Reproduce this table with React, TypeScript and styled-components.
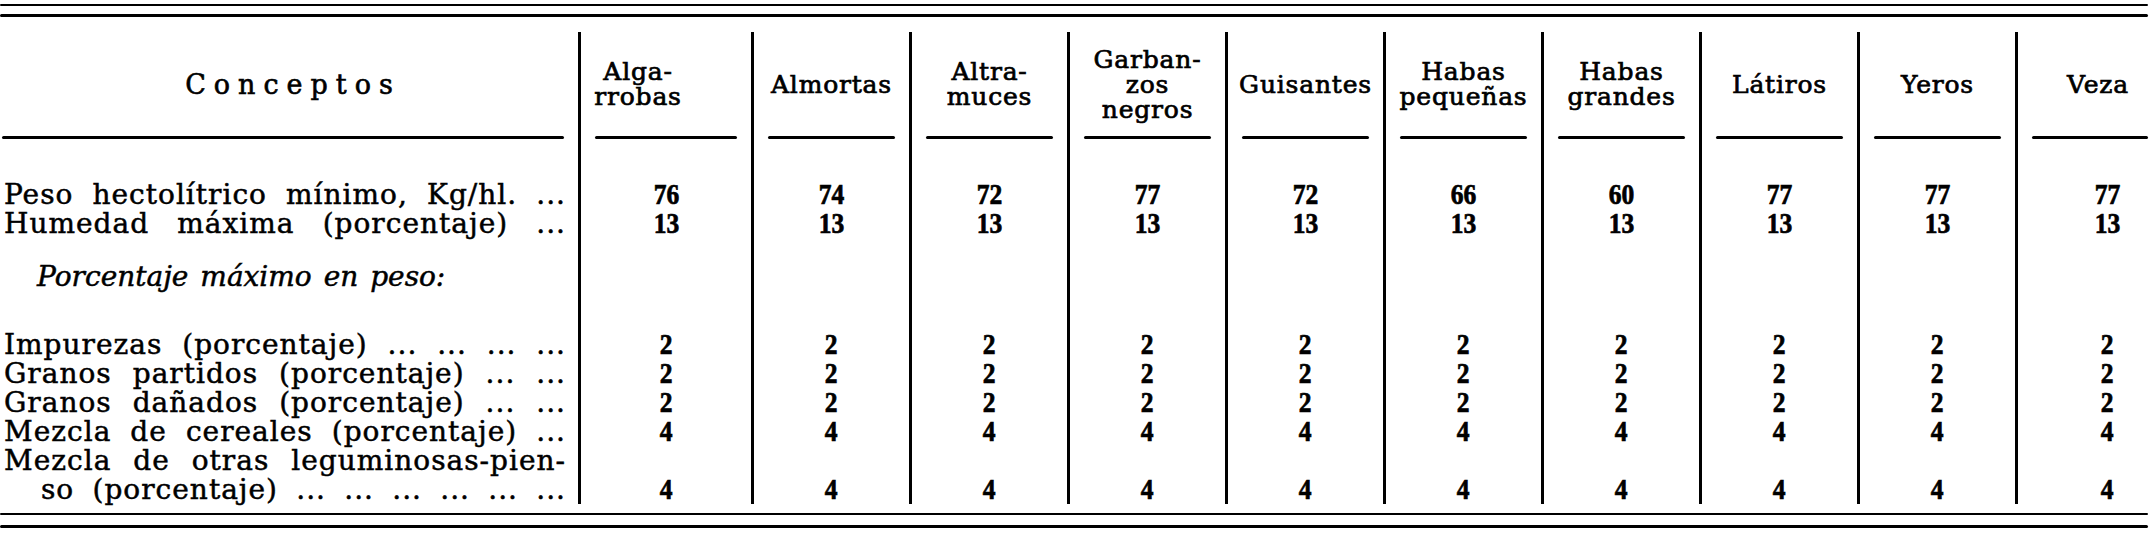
import React from 'react'
import styled, { createGlobalStyle, css } from 'styled-components'

const GlobalStyle = createGlobalStyle`
  html, body {
    margin: 0;
    padding: 0;
    background: #fff;
  }
  body {
    width: 2150px;
    height: 533px;
    overflow: hidden;
    color: #000;
    font-family: "DejaVu Serif", serif;
  }
`

const COLUMNS = '578px 173px repeat(8, 158px) 133px'

const Sheet = styled.div`
  width: 2148px;
  padding-top: 4px;
`

const DoubleRule = styled.div<{ $top: number; $gap: number }>`
  margin-top: ${p => p.$top}px;
  display: flex;
  flex-direction: column;
  gap: ${p => p.$gap}px;
`

const RuleLine = styled.div<{ $h: number }>`
  height: ${p => p.$h}px;
  background: #000;
  border-radius: 2px;
`

const Row = styled.div<{ $space?: number }>`
  display: grid;
  grid-template-columns: ${COLUMNS};
  > * {
    padding-top: ${p => p.$space ?? 0}px;
  }
`

const HeaderRow = styled(Row)`
  margin-top: 15px;
  height: 104px;
`

const ConceptHead = styled.div`
  display: flex;
  align-items: center;
  justify-content: center;
  padding-left: 8px;
  font-size: 27px;
  letter-spacing: 8px;
  -webkit-text-stroke: 0.6px #000;
`

const HeadCell = styled.div<{ $shift?: number }>`
  border-left: 3px solid #000;
  display: flex;
  flex-direction: column;
  align-items: center;
  justify-content: center;
  font-size: 25px;
  line-height: 25px;
  letter-spacing: 0.8px;
  text-align: center;
  -webkit-text-stroke: 0.7px #000;
  ${p => p.$shift && p.$shift > 0 && css`padding-left: ${p.$shift}px;`}
  ${p => p.$shift && p.$shift < 0 && css`padding-right: ${-p.$shift}px;`}
`

const UnderCell = styled.div<{ $first?: boolean; $last?: boolean }>`
  border-left: ${p => (p.$first ? 'none' : '3px solid #000')};
  padding-left: ${p => (p.$first ? 2 : 14)}px;
  padding-right: ${p => (p.$last ? 0 : 14)}px;
`

const Underline = styled.div`
  height: 3px;
  background: #000;
  border-radius: 2px;
`

const Label = styled.div`
  padding-left: 4px;
  padding-right: 12px;
  font-size: 28px;
  line-height: 29px;
  letter-spacing: 1px;
  -webkit-text-stroke: 0.5px #000;
`

const LabelLine = styled.div<{ $indent?: number }>`
  padding-left: ${p => p.$indent ?? 0}px;
  text-align: justify;
  text-align-last: justify;
  white-space: nowrap;
`

const Section = styled.div`
  padding-left: 37px;
  font-size: 28px;
  line-height: 29px;
  word-spacing: 3px;
  font-style: italic;
  -webkit-text-stroke: 0.5px #000;
`

const Value = styled.div<{ $shift?: number }>`
  border-left: 3px solid #000;
  display: flex;
  align-items: flex-end;
  justify-content: center;
  font-family: "Liberation Serif", serif;
  font-weight: bold;
  font-size: 29px;
  line-height: 29px;
  -webkit-text-stroke: 0.7px #000;
  ${p => p.$shift && css`padding-left: ${p.$shift}px;`}
`

const Num = styled.span`
  display: inline-block;
  transform: scaleX(0.88);
`

const heads: { lines: string[]; shift?: number }[] = [
  { lines: ['Alga-', 'rrobas'], shift: -56 },
  { lines: ['Almortas'] },
  { lines: ['Altra-', 'muces'] },
  { lines: ['Garban-', 'zos', 'negros'] },
  { lines: ['Guisantes'] },
  { lines: ['Habas', 'pequeñas'] },
  { lines: ['Habas', 'grandes'] },
  { lines: ['Látiros'] },
  { lines: ['Yeros'] },
  { lines: ['Veza'], shift: 30 },
]

type RowData = {
  label?: { text: string; indent?: number }[]
  section?: string
  values?: number[]
  space: number
}

const same = (n: number) => Array(10).fill(n)

const rows: RowData[] = [
  { label: [{ text: 'Peso hectolítrico mínimo, Kg/hl. ...' }], values: [76, 74, 72, 77, 72, 66, 60, 77, 77, 77], space: 41 },
  { label: [{ text: 'Humedad máxima (porcentaje) ...' }], values: same(13), space: 0 },
  { section: 'Porcentaje máximo en peso:', space: 24 },
  { label: [{ text: 'Impurezas (porcentaje) ... ... ... ...' }], values: same(2), space: 39 },
  { label: [{ text: 'Granos partidos (porcentaje) ... ...' }], values: same(2), space: 0 },
  { label: [{ text: 'Granos dañados (porcentaje) ... ...' }], values: same(2), space: 0 },
  { label: [{ text: 'Mezcla de cereales (porcentaje) ...' }], values: same(4), space: 0 },
  {
    label: [
      { text: 'Mezcla de otras leguminosas-pien-' },
      { text: 'so (porcentaje) ... ... ... ... ... ...', indent: 37 },
    ],
    values: same(4),
    space: 0,
  },
]

export default function App() {
  return (
    <Sheet>
      <GlobalStyle />
      <DoubleRule $top={0} $gap={8}>
        <RuleLine $h={2} />
        <RuleLine $h={3} />
      </DoubleRule>

      <HeaderRow>
        <ConceptHead>Conceptos</ConceptHead>
        {heads.map((h, i) => (
          <HeadCell key={i} $shift={h.shift}>
            {h.lines.map(l => <span key={l}>{l}</span>)}
          </HeadCell>
        ))}
      </HeaderRow>

      <Row>
        {[null, ...heads].map((_, i) => (
          <UnderCell key={i} $first={i === 0} $last={i === heads.length}>
            <Underline />
          </UnderCell>
        ))}
      </Row>

      {rows.map((r, ri) => (
        <Row key={ri} $space={r.space}>
          {r.section
            ? <Section>{r.section}</Section>
            : (
              <Label>
                {r.label!.map(l => (
                  <LabelLine key={l.text} $indent={l.indent}>{l.text}</LabelLine>
                ))}
              </Label>
            )}
          {heads.map((_, ci) => (
            <Value key={ci} $shift={ci === heads.length - 1 ? 48 : 0}>
              {r.values ? <Num>{r.values[ci]}</Num> : ''}
            </Value>
          ))}
        </Row>
      ))}

      <DoubleRule $top={9} $gap={10}>
        <RuleLine $h={2} />
        <RuleLine $h={3} />
      </DoubleRule>
    </Sheet>
  )
}
